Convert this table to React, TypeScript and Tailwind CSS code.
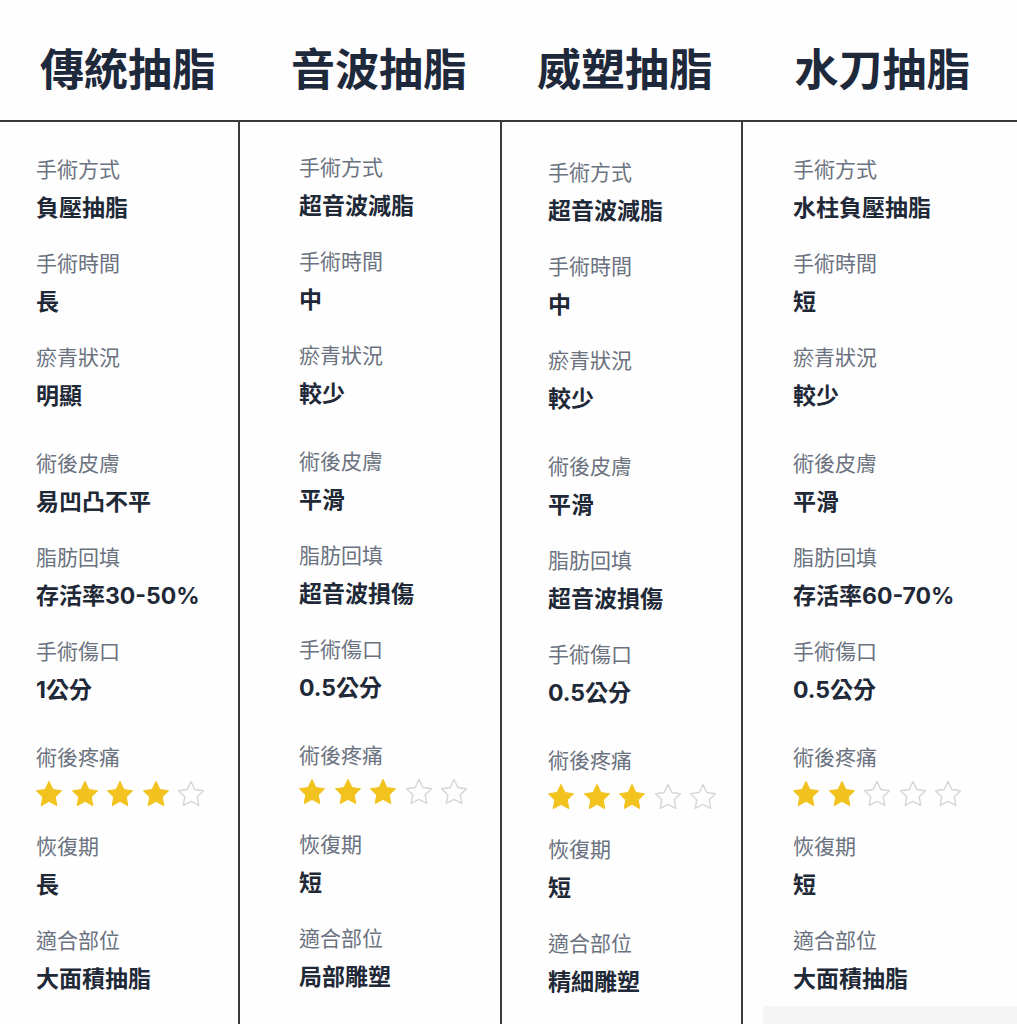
import React from 'react'

type Row = { label: string; value?: string; stars?: number }

interface Column {
  title: string
  rows: Row[]
}

const font = { fontFamily: '"Noto Sans CJK TC", "Noto Sans", sans-serif' }
const valueFont = { fontFamily: 'Inter, "Noto Sans CJK TC", sans-serif' }

const columns: Column[] = [
  {
    title: '傳統抽脂',
    rows: [
      { label: '手術方式', value: '負壓抽脂' },
      { label: '手術時間', value: '長' },
      { label: '瘀青狀況', value: '明顯' },
      { label: '術後皮膚', value: '易凹凸不平' },
      { label: '脂肪回填', value: '存活率30-50%' },
      { label: '手術傷口', value: '1公分' },
      { label: '術後疼痛', stars: 4 },
      { label: '恢復期', value: '長' },
      { label: '適合部位', value: '大面積抽脂' },
    ],
  },
  {
    title: '音波抽脂',
    rows: [
      { label: '手術方式', value: '超音波減脂' },
      { label: '手術時間', value: '中' },
      { label: '瘀青狀況', value: '較少' },
      { label: '術後皮膚', value: '平滑' },
      { label: '脂肪回填', value: '超音波損傷' },
      { label: '手術傷口', value: '0.5公分' },
      { label: '術後疼痛', stars: 3 },
      { label: '恢復期', value: '短' },
      { label: '適合部位', value: '局部雕塑' },
    ],
  },
  {
    title: '威塑抽脂',
    rows: [
      { label: '手術方式', value: '超音波減脂' },
      { label: '手術時間', value: '中' },
      { label: '瘀青狀況', value: '較少' },
      { label: '術後皮膚', value: '平滑' },
      { label: '脂肪回填', value: '超音波損傷' },
      { label: '手術傷口', value: '0.5公分' },
      { label: '術後疼痛', stars: 3 },
      { label: '恢復期', value: '短' },
      { label: '適合部位', value: '精細雕塑' },
    ],
  },
  {
    title: '水刀抽脂',
    rows: [
      { label: '手術方式', value: '水柱負壓抽脂' },
      { label: '手術時間', value: '短' },
      { label: '瘀青狀況', value: '較少' },
      { label: '術後皮膚', value: '平滑' },
      { label: '脂肪回填', value: '存活率60-70%' },
      { label: '手術傷口', value: '0.5公分' },
      { label: '術後疼痛', stars: 2 },
      { label: '恢復期', value: '短' },
      { label: '適合部位', value: '大面積抽脂' },
    ],
  },
]

// spacing before each row (px), the table isn't perfectly even
const rowGaps = ['mt-0', 'mt-[24px]', 'mt-[24px]', 'mt-[36px]', 'mt-[24px]', 'mt-[24px]', 'mt-[36px]', 'mt-[19px]', 'mt-[24px]']

const bodyCols = [
  'w-[240px] pl-[36px] pt-[31px] border-r-2 border-[#3a3a3a]',
  'w-[262px] pl-[59px] pt-[29px] border-r-2 border-[#3a3a3a]',
  'w-[241px] pl-[46px] pt-[34px] border-r-2 border-[#3a3a3a]',
  'flex-1 pl-[50px] pt-[31px]',
]

const headCols = ['w-[256px]', 'w-[246px]', 'w-[246px]', 'flex-1']

const STAR = 'M12 2.2l2.95 6.1 6.65.95-4.8 4.7 1.15 6.65L12 17.45 6.05 20.6l1.15-6.65-4.8-4.7 6.65-.95z'

function Stars({ count }: { count: number }) {
  return (
    <div className="flex items-center gap-[9.5px] h-[30px]">
      {[0, 1, 2, 3, 4].map((i) =>
        i < count ? (
          <svg key={i} viewBox="2 1.8 20 20" className="w-[26px] h-[26px]">
            <path d={STAR} fill="#f2c31f" stroke="#f2c31f" strokeWidth="0.8" strokeLinejoin="round" />
          </svg>
        ) : (
          <svg key={i} viewBox="2 1.8 20 20" className="w-[26px] h-[26px]">
            <path d={STAR} fill="none" stroke="#d4d6da" strokeWidth="1.1" strokeLinejoin="round" />
          </svg>
        )
      )}
    </div>
  )
}

export default function App() {
  return (
    <div className="w-[1017px] h-[1024px] bg-[#fefefe] overflow-hidden flex flex-col" style={font}>
      {/* Header */}
      <div className="flex h-[122px] items-center border-b-2 border-[#3a3a3a] shrink-0">
        {columns.map((c, i) => (
          <div key={c.title} className={`${headCols[i]} flex justify-center pt-[14px]`}>
            <h2 className="text-[44px] leading-none font-bold text-[#1e293b]">{c.title}</h2>
          </div>
        ))}
      </div>

      {/* Body */}
      <div className="flex flex-1">
        {columns.map((c, ci) => (
          <div key={c.title} className={`${bodyCols[ci]} flex flex-col`}>
            {c.rows.map((r, ri) => (
              <div key={r.label} className={`${rowGaps[ri]} flex flex-col`}>
                <div className="text-[21px] leading-[30px] text-[#6b7280]">{r.label}</div>
                {r.stars !== undefined ? (
                  <div className="mt-[8px] mb-[2px]">
                    <Stars count={r.stars} />
                  </div>
                ) : (
                  <div className="mt-[10px] text-[23px] leading-[30px] font-bold text-[#1f2937]" style={valueFont}>
                    {r.value}
                  </div>
                )}
              </div>
            ))}
            {ci === 3 && <div className="mt-[12px] ml-[-30px] h-[24px] bg-[#f5f5f6]" />}
          </div>
        ))}
      </div>
    </div>
  )
}
